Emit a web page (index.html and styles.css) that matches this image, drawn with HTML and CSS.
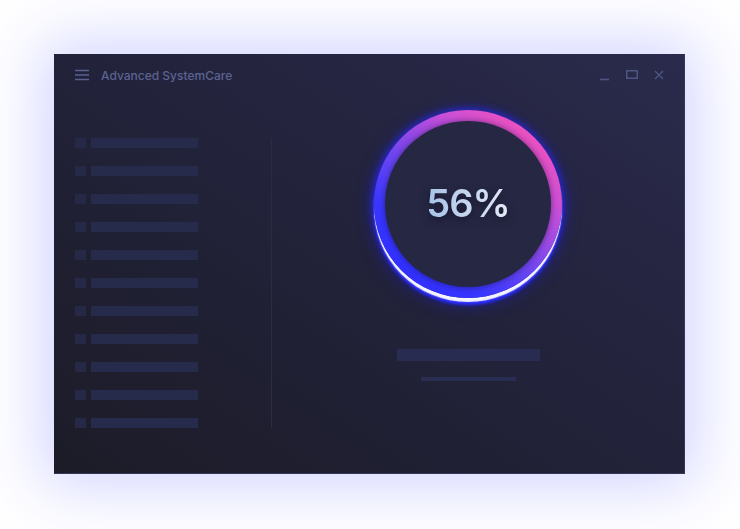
FILE: index.html
```html
<!DOCTYPE html>
<html lang="en">
<head>
<meta charset="utf-8">
<title>Advanced SystemCare</title>
<link rel="stylesheet" href="styles.css">
</head>
<body>
<div class="window">
  <header class="titlebar">
    <svg class="menu-icon" width="14" height="12" viewBox="0 0 14 12"><path d="M0 1.5H14M0 6H14M0 10.5H14" stroke="currentColor" stroke-width="1.6"/></svg>
    <span class="app-title">Advanced SystemCare</span>
    <div class="controls">
      <svg class="ctl" width="11" height="11" viewBox="0 0 11 11"><path d="M1 9.5H10" stroke="currentColor" stroke-width="1.6"/></svg>
      <svg class="ctl" width="12" height="10" viewBox="0 0 12 10"><rect x="0.75" y="0.75" width="10.5" height="7.5" fill="none" stroke="currentColor" stroke-width="1.5"/></svg>
      <svg class="ctl" width="10" height="10" viewBox="0 0 10 10"><path d="M1 1L9 9M9 1L1 9" stroke="currentColor" stroke-width="1.3"/></svg>
    </div>
  </header>
  <div class="content">
    <nav class="sidebar">
      <div class="row"><span class="sq"></span><span class="bar"></span></div>
      <div class="row"><span class="sq"></span><span class="bar"></span></div>
      <div class="row"><span class="sq"></span><span class="bar"></span></div>
      <div class="row"><span class="sq"></span><span class="bar"></span></div>
      <div class="row"><span class="sq"></span><span class="bar"></span></div>
      <div class="row"><span class="sq"></span><span class="bar"></span></div>
      <div class="row"><span class="sq"></span><span class="bar"></span></div>
      <div class="row"><span class="sq"></span><span class="bar"></span></div>
      <div class="row"><span class="sq"></span><span class="bar"></span></div>
      <div class="row"><span class="sq"></span><span class="bar"></span></div>
      <div class="row"><span class="sq"></span><span class="bar"></span></div>
    </nav>
    <main class="main">
      <div class="ring">
        <div class="disc"><span class="pct">56%</span></div>
      </div>
      <div class="line-lg"></div>
      <div class="line-sm"></div>
    </main>
  </div>
</div>
</body>
</html>
```
FILE: styles.css
```css
html, body {
  margin: 0;
  padding: 0;
  background: #ffffff;
  width: 740px;
  height: 529px;
  overflow: hidden;
}
body {
  padding: 54px 0 0 54px;
  box-sizing: border-box;
  font-family: "Inter", "Lato", sans-serif;
}
.window {
  width: 631px;
  height: 420px;
  box-sizing: border-box;
  background: linear-gradient(to top right, #1c1c28 0%, #22223a 50%, #2a2a4c 100%);
  box-shadow: 0 0 60px 12px rgba(105, 112, 255, 0.3);
  border-bottom: 1px solid #34365a;
  border-right: 1px solid #34365a;
  display: flex;
  flex-direction: column;
}
.titlebar {
  height: 42px;
  display: flex;
  align-items: center;
  padding: 0 20px 0 21px;
  color: #5a6190;
}
.menu-icon { display: block; }
.app-title {
  margin-left: 12px;
  font-size: 12px;
  font-weight: 500;
  color: #5c6392;
}
.controls {
  margin-left: auto;
  display: flex;
  align-items: center;
  gap: 16px;
  color: #4f5582;
}
.ctl { display: block; }
.content {
  display: flex;
  align-items: flex-start;
}
.sidebar {
  width: 218px;
  box-sizing: border-box;
  margin-top: 42px;
  padding-left: 21px;
  border-right: 1px solid #2a2b44;
  display: flex;
  flex-direction: column;
  gap: 18px;
}
.row {
  display: flex;
  gap: 5px;
  height: 10px;
}
.sq {
  width: 11px;
  height: 10px;
  background: #262945;
}
.bar {
  width: 107px;
  height: 10px;
  background: #272b4b;
}
.main {
  width: 392px;
  padding-top: 14px;
  display: flex;
  flex-direction: column;
  align-items: center;
}
.ring {
  width: 188px;
  height: 188px;
  box-sizing: border-box;
  padding: 11px;
  border-radius: 50%;
  background: linear-gradient(220deg, #ff52b4 6%, #c94fd8 30%, #6a45f2 55%, #3a36ff 72%, #2e2eff 90%);
  box-shadow:
    0 4px 1px rgba(255, 255, 255, 0.95),
    0 7px 3px #2a2aff,
    0 0 8px rgba(40, 40, 255, 0.95),
    0 4px 18px rgba(30, 30, 255, 0.6);
}
.disc {
  width: 100%;
  height: 100%;
  border-radius: 50%;
  background: #262743;
  box-shadow: 0 0 6px rgba(10, 10, 40, 0.5);
  display: flex;
  align-items: center;
  justify-content: center;
}
.pct {
  font-family: "Inter", "Lato", sans-serif;
  font-size: 38px;
  font-weight: 600;
  letter-spacing: -1px;
  background: linear-gradient(to right, #a6c2e8, #e4eaf6);
  -webkit-background-clip: text;
  background-clip: text;
  color: transparent;
  filter: drop-shadow(0 3px 4px rgba(8, 8, 25, 0.6));
  margin-top: -2px;
}
.line-lg {
  width: 143px;
  height: 12px;
  margin-top: 51px;
  background: #282c50;
}
.line-sm {
  width: 95px;
  height: 4px;
  margin-top: 16px;
  background: #292d52;
}
```
